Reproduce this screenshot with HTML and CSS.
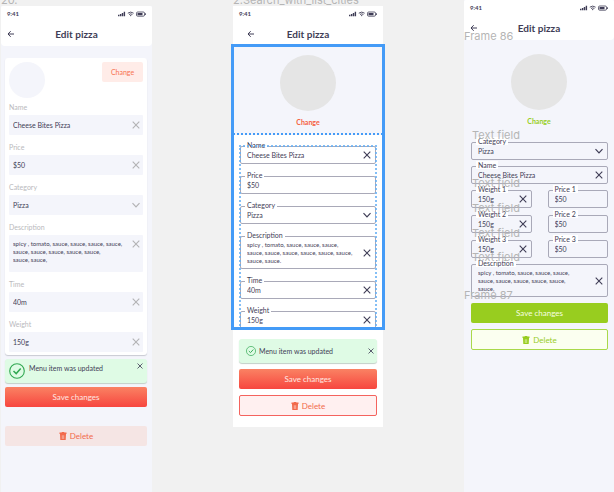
FILE: index.html
```html
<!DOCTYPE html>
<html lang="en">
<head>
<meta charset="utf-8">
<title>Edit pizza</title>
<link rel="stylesheet" href="styles.css">
</head>
<body>
<svg class="sprite" aria-hidden="true">
  <symbol id="status" viewBox="0 0 28 6">
    <path d="M0 5.200h1.400V3.800H0zM1.900 5.200h1.400V3H1.900zM3.800 5.200h1.400V2H3.800zM5.700 5.200h1.400V.8H5.700z" fill="currentColor"/>
    <path d="M9.800 2.200Q12.700 0 15.600 2.200M11 3.500Q12.700 2.200 14.400 3.500" fill="none" stroke="currentColor" stroke-width=".9"/>
    <circle cx="12.700" cy="4.600" r=".7" fill="currentColor"/>
    <rect x="18.500" y="1" width="8" height="4.200" rx="1.200" fill="none" stroke="currentColor" stroke-width=".8"/>
    <path d="M19.500 2h5v2.200h-5zM27 2.300h.8v1.600H27z" fill="currentColor"/>
  </symbol>
  <symbol id="back" viewBox="0 0 8 8"><path d="M7 4H1M3.700 1.200L1 4l2.700 2.800" fill="none" stroke="currentColor"/></symbol>
  <symbol id="cross" viewBox="0 0 8 8"><path d="M.7.7l6.600 6.600M7.300.7L.7 7.300" fill="none" stroke="currentColor" stroke-width="1.100"/></symbol>
  <symbol id="chevron" viewBox="0 0 8 8"><path d="M.5 2.200L4 5.800l3.500-3.600" fill="none" stroke="currentColor" stroke-width="1.200"/></symbol>
  <symbol id="check" viewBox="0 0 16 16"><circle cx="8" cy="8" r="7.300" fill="none" stroke="currentColor" stroke-width="1.100"/><path d="M4.500 8l2.700 2.600 4.500-5" fill="none" stroke="currentColor" stroke-width="1.500"/></symbol>
  <symbol id="trash" viewBox="0 0 8 8"><path d="M.5.600h2L3 0h2l.5.600h2v1.300h-7z" fill="currentColor"/><path fill-rule="evenodd" d="M1 2.100h6L6.700 8H1.300zM2.900 3.200v3.800h.5V3.200zM4.600 3.200v3.800h.5V3.200z" fill="currentColor"/></symbol>
</svg>

<div class="board">
  <main class="phone soft">
    <span class="tag top">20.</span>
    <header class="header">
      <div class="status"><span>9:41</span><svg><use href="#status"/></svg></div>
      <div class="bar"><button class="icon" aria-label="Back"><svg><use href="#back"/></svg></button><h1>Edit pizza</h1></div>
    </header>
    <form class="card">
      <div class="card-head"><div class="avatar"></div><button type="button" class="change">Change</button></div>
      <div class="filled"><label for="a1">Name</label><div class="box"><input id="a1" value="Cheese Bites Pizza"><button type="button" class="icon" aria-label="Clear name"><svg><use href="#cross"/></svg></button></div></div>
      <div class="filled"><label for="a2">Price</label><div class="box"><input id="a2" value="$50"><button type="button" class="icon" aria-label="Clear price"><svg><use href="#cross"/></svg></button></div></div>
      <div class="filled"><label for="a3">Category</label><div class="box"><select id="a3"><option>Pizza</option></select><svg class="arrow"><use href="#chevron"/></svg></div></div>
      <div class="filled"><label for="a4">Description</label><div class="box tall"><textarea id="a4" rows="3">spicy , tomato, sauce, sauce, sauce, sauce,
sauce, sauce, sauce, sauce, sauce,
sauce, sauce,</textarea><button type="button" class="icon" aria-label="Clear description"><svg><use href="#cross"/></svg></button></div></div>
      <div class="filled"><label for="a5">Time</label><div class="box"><input id="a5" value="40m"><button type="button" class="icon" aria-label="Clear time"><svg><use href="#cross"/></svg></button></div></div>
      <div class="filled"><label for="a6">Weight</label><div class="box"><input id="a6" value="150g"><button type="button" class="icon" aria-label="Clear weight"><svg><use href="#cross"/></svg></button></div></div>
    </form>
    <div class="actions">
      <div class="toast large" role="status"><svg class="ok"><use href="#check"/></svg><span>Menu item was updated</span><button class="icon" aria-label="Dismiss"><svg><use href="#cross"/></svg></button></div>
      <button class="btn save">Save changes</button>
      <button class="btn delete muted"><svg><use href="#trash"/></svg>Delete</button>
    </div>
  </main>

  <main class="phone outlined">
    <span class="tag top">2.Search_with_list_cities</span>
    <header class="header">
      <div class="status"><span>9:41</span><svg><use href="#status"/></svg></div>
      <div class="bar inset"><button class="icon" aria-label="Back"><svg><use href="#back"/></svg></button><h1>Edit pizza</h1></div>
    </header>
    <form class="selection">
      <div class="hero"><div class="photo"></div><button type="button" class="link">Change</button></div>
      <div class="fields">
        <div class="field"><label for="b1">Name</label><input id="b1" value="Cheese Bites Pizza"><button type="button" class="icon" aria-label="Clear name"><svg><use href="#cross"/></svg></button></div>
        <div class="field"><label for="b2">Price</label><input id="b2" value="$50"></div>
        <div class="field"><label for="b3">Category</label><select id="b3"><option>Pizza</option></select><svg class="arrow"><use href="#chevron"/></svg></div>
        <div class="field tall"><label for="b4">Description</label><textarea id="b4" rows="3">spicy , tomato, sauce, sauce, sauce,
sauce, sauce, sauce, sauce, sauce, sauce,
sauce, sauce.</textarea><button type="button" class="icon" aria-label="Clear description"><svg><use href="#cross"/></svg></button></div>
        <div class="field"><label for="b5">Time</label><input id="b5" value="40m"><button type="button" class="icon" aria-label="Clear time"><svg><use href="#cross"/></svg></button></div>
        <div class="field"><label for="b6">Weight</label><input id="b6" value="150g"><button type="button" class="icon" aria-label="Clear weight"><svg><use href="#cross"/></svg></button></div>
      </div>
    </form>
    <div class="actions">
      <div class="toast" role="status"><svg class="ok"><use href="#check"/></svg><span>Menu item was updated</span><button class="icon" aria-label="Dismiss"><svg><use href="#cross"/></svg></button></div>
      <button class="btn save">Save changes</button>
      <button class="btn delete"><svg><use href="#trash"/></svg>Delete</button>
    </div>
  </main>

  <main class="phone green">
    <header class="header">
      <div class="status"><span>9:41</span><svg><use href="#status"/></svg></div>
      <div class="bar"><button class="icon" aria-label="Back"><svg><use href="#back"/></svg></button><h1>Edit pizza</h1></div>
      <span class="tag frame">Frame 86</span>
    </header>
    <form>
      <div class="hero"><div class="photo"></div><button type="button" class="link">Change</button></div>
      <div class="fields">
        <div class="field"><span class="tag">Text field</span><label for="c1">Category</label><select id="c1"><option>Pizza</option></select><svg class="arrow"><use href="#chevron"/></svg></div>
        <div class="field"><label for="c2">Name</label><input id="c2" value="Cheese Bites Pizza"><button type="button" class="icon" aria-label="Clear name"><svg><use href="#cross"/></svg></button></div>
        <div class="pairs">
          <div class="field"><span class="tag">Text field</span><label for="c3">Weight 1</label><input id="c3" value="150g"><button type="button" class="icon" aria-label="Clear weight 1"><svg><use href="#cross"/></svg></button></div>
          <div class="field"><label for="c4">Price 1</label><input id="c4" value="$50"></div>
          <div class="field"><span class="tag">Text field</span><label for="c5">Weight 2</label><input id="c5" value="150g"><button type="button" class="icon" aria-label="Clear weight 2"><svg><use href="#cross"/></svg></button></div>
          <div class="field"><label for="c6">Price 2</label><input id="c6" value="$50"></div>
          <div class="field"><span class="tag">Text field</span><label for="c7">Weight 3</label><input id="c7" value="150g"><button type="button" class="icon" aria-label="Clear weight 3"><svg><use href="#cross"/></svg></button></div>
          <div class="field"><label for="c8">Price 3</label><input id="c8" value="$50"></div>
        </div>
        <div class="field tall"><span class="tag">Text field</span><label for="c9">Description</label><textarea id="c9" rows="3">spicy , tomato, sauce, sauce, sauce,
sauce, sauce, sauce, sauce, sauce,
sauce,</textarea><button type="button" class="icon" aria-label="Clear description"><svg><use href="#cross"/></svg></button></div>
      </div>
    </form>
    <div class="actions">
      <span class="tag frame">Frame 87</span>
      <button class="btn save">Save changes</button>
      <button class="btn delete"><svg><use href="#trash"/></svg>Delete</button>
    </div>
  </main>
</div>
</body>
</html>
```
FILE: styles.css
```css
* { box-sizing: border-box; }

body {
  margin: 0;
  background: #f1f1f1;
  color: #3f3d56;
  font: 7px/8px Lato, sans-serif;
  overflow: hidden;
}

button, input, select, textarea {
  margin: 0;
  padding: 0;
  border: 0;
  background: none;
  color: inherit;
  font: inherit;
  border-radius: 0;
  appearance: none;
  outline: 0;
}

button { cursor: pointer; }
svg { display: block; flex: none; width: 8px; height: 8px; }
.sprite { position: absolute; width: 0; height: 0; }

.board {
  display: grid;
  grid-template-columns: 151fr 150fr 150fr;
  gap: 81px;
  min-height: 100vh;
  padding-left: 1px;
}

.phone {
  position: relative;
  min-width: 0;
  margin-top: 6px;
  background: #f4f5fb;
}
.outlined { align-self: start; background: #fff; padding-bottom: 11px; }
.green { margin-top: 0; }

/* canvas captions */
.tag {
  position: absolute;
  z-index: 2;
  left: 0;
  bottom: calc(100% + 1px);
  color: #b5b5b5;
  font: 11px/14px Inter, sans-serif;
  white-space: nowrap;
  pointer-events: none;
}
.tag.top { bottom: calc(100% - 1px); }
.tag.frame { bottom: auto; left: 0; top: 29px; }

/* header */
.header {
  position: relative;
  height: 40px;
  padding: 4px 6px 0;
  background: #fff;
  border-radius: 2px 2px 4px 4px;
}
.status {
  display: flex;
  justify-content: space-between;
  align-items: center;
  font-size: 6px;
  font-weight: 700;
}
.status svg { width: 28px; height: 6px; }
.bar {
  display: grid;
  grid-template-columns: 8px 1fr 8px;
  align-items: center;
  margin-top: 10px;
}
.bar.inset { padding: 0 8px; }
h1 {
  margin: 0;
  text-align: center;
  font-size: 10px;
  line-height: 12px;
  font-weight: 700;
}

/* filled form */
.card {
  display: flex;
  flex-direction: column;
  gap: 7px;
  margin: 12px 5px 4px 4px;
  padding: 4px 4px 3px;
  background: #fff;
  border-radius: 3px;
  box-shadow: 0 1px 1px #c9cad2;
}
.card-head {
  display: flex;
  justify-content: space-between;
  align-items: flex-start;
  margin-bottom: -3px;
}
.avatar { width: 36px; height: 36px; border-radius: 50%; background: #f4f5fb; }
.change {
  width: 41px;
  height: 20px;
  border-radius: 2px;
  background: #ffece8;
  color: #f87250;
}
.filled label {
  display: block;
  margin-bottom: 3px;
  line-height: 10px;
  color: #b9b9bd;
}
.box {
  display: flex;
  align-items: center;
  height: 20px;
  padding: 0 3px 0 4px;
  background: #f4f5fb;
  border-radius: 1px;
}
.box.tall { height: 37px; align-items: flex-start; padding-top: 5px; }
.box svg { color: #b3b3b5; }
input, select, textarea { flex: 1; width: 0; min-width: 0; }
textarea {
  height: 24px;
  font-size: 6px;
  resize: none;
  white-space: pre;
  overflow: hidden;
}
.arrow { pointer-events: none; }

/* outlined form */
.hero {
  display: flex;
  flex-direction: column;
  align-items: center;
  gap: 6px;
  padding: 9px 0 8px;
  background: #f4f5fb;
}
.green .hero { padding-top: 14px; }
.photo { width: 56px; height: 56px; border-radius: 50%; background: #e5e5e5; }
.link { line-height: 10px; color: #f4603f; font-weight: 700; }
.green .link { color: #98ce1f; }

.fields {
  display: flex;
  flex-direction: column;
  gap: 12px;
  padding: 11px 7px 0;
}
.green .fields { gap: 6px; padding: 8px 6px 0 7px; }
.pairs {
  display: grid;
  grid-template-columns: repeat(2, minmax(0, 1fr));
  gap: 7px 16px;
}

.field {
  position: relative;
  display: flex;
  align-items: center;
  height: 18px;
  padding: 0 4px 0 6px;
  border: 1px solid #a9a9b8;
  border-radius: 2px;
}
.field.tall { height: 33px; }
.field label {
  position: absolute;
  top: -6px;
  left: 4px;
  padding: 0 2px;
  background: #fff;
}

.selection { position: relative; }
.selection::after {
  content: "";
  position: absolute;
  inset: -2px -2px -1px;
  border: 3px solid #449bf7;
  pointer-events: none;
}
.selection .hero { border: 1px dotted #449bf7; border-bottom-width: 2px; padding: 8px 0 6px; }
.selection .fields { position: relative; }
.selection .fields::after {
  content: "";
  position: absolute;
  inset: 10px 6px 0;
  border: 2px dotted #66b0f5;
  border-bottom: 0;
  opacity: .8;
  pointer-events: none;
}

/* toast and buttons */
.actions { position: relative; display: flex; flex-direction: column; }
.soft .actions { padding: 0 5px 0 4px; gap: 4px; }
.outlined .actions { padding: 10px 6px 0; gap: 6px; }
.green .actions { padding: 6px 6px 0 7px; gap: 6px; }
.green .actions .tag { top: -9px; }

.toast {
  display: flex;
  align-items: center;
  gap: 3px;
  height: 24px;
  padding: 0 3px 0 7px;
  border-radius: 3px;
  background: #dffbe5;
  box-shadow: 0 1px 1px #c3d0c8;
  line-height: 10px;
}
.toast span { flex: 1; white-space: nowrap; }
.toast .ok { width: 10px; height: 10px; color: #32a852; }
.toast .icon svg { width: 6px; height: 6px; }
.toast.large { align-items: flex-start; gap: 4px; padding: 4px 4px 0; }
.toast.large .ok { width: 16px; height: 16px; }

.btn {
  display: flex;
  justify-content: center;
  align-items: center;
  gap: 3px;
  height: 20px;
  border-radius: 2px;
  font-size: 8px;
  line-height: 10px;
}
.save { background: linear-gradient(#fa8263, #f7463f); color: #ffe9e2; }
.delete { height: 21px; border: 1px solid #f4635e; background: #fff0f0; color: #f26a4b; }
.delete.muted { height: 20px; margin-top: 15px; border: 0; background: #f5e5e4; }
.green .save { background: #98cd1f; color: #f7ffe0; }
.green .delete { border-color: #a9d94a; background: #fbfff0; color: #98cd1f; }
```
